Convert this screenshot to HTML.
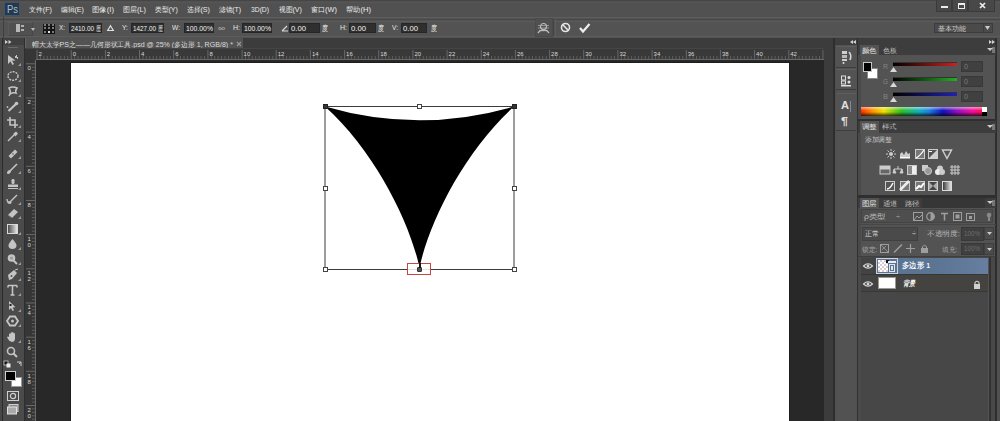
<!DOCTYPE html>
<html><head><meta charset="utf-8">
<style>
*{margin:0;padding:0;box-sizing:border-box}
html,body{width:1000px;height:421px;overflow:hidden;background:#282828;font-family:"Liberation Sans",sans-serif;}
.a{position:absolute}
.t{white-space:nowrap;line-height:1}
svg{position:absolute;overflow:visible}
</style></head><body>
<div class="a" style="left:0px;top:0px;width:1000px;height:17px;background:#515151;"></div>
<div class="a" style="left:0px;top:0px;width:1000px;height:1px;background:#464646;"></div>
<div class="a" style="left:0px;top:2px;width:1000px;height:1px;background:#555555;"></div>
<div class="a" style="left:4px;top:1.5px;width:16px;height:14.5px;background:#28384a;border:1px solid #3d566c;"></div>
<div class="a t" id="t1" style="left:6.5px;top:4.5px;font-size:10px;color:#9cc0d8;transform:scaleX(0.942);transform-origin:0 0;">Ps</div>
<div class="a t" id="t2" style="left:29px;top:6px;font-size:7.4px;color:#ececec;transform:scaleX(0.981);transform-origin:0 0;">文件(F)</div>
<div class="a t" id="t3" style="left:61px;top:6px;font-size:7.4px;color:#ececec;transform:scaleX(0.964);transform-origin:0 0;">编辑(E)</div>
<div class="a t" id="t4" style="left:92px;top:6px;font-size:7.4px;color:#ececec;transform:scaleX(1.048);transform-origin:0 0;">图像(I)</div>
<div class="a t" id="t5" style="left:123px;top:6px;font-size:7.4px;color:#ececec;transform:scaleX(0.998);transform-origin:0 0;">图层(L)</div>
<div class="a t" id="t6" style="left:155px;top:6px;font-size:7.4px;color:#ececec;transform:scaleX(0.964);transform-origin:0 0;">类型(Y)</div>
<div class="a t" id="t7" style="left:187px;top:6px;font-size:7.4px;color:#ececec;transform:scaleX(0.964);transform-origin:0 0;">选择(S)</div>
<div class="a t" id="t8" style="left:219px;top:6px;font-size:7.4px;color:#ececec;transform:scaleX(0.939);transform-origin:0 0;">滤镜(T)</div>
<div class="a t" id="t9" style="left:251px;top:6px;font-size:7.4px;color:#ececec;transform:scaleX(0.913);transform-origin:0 0;">3D(D)</div>
<div class="a t" id="t10" style="left:279px;top:6px;font-size:7.4px;color:#ececec;transform:scaleX(0.964);transform-origin:0 0;">视图(V)</div>
<div class="a t" id="t11" style="left:311px;top:6px;font-size:7.4px;color:#ececec;transform:scaleX(1.004);transform-origin:0 0;">窗口(W)</div>
<div class="a t" id="t12" style="left:346px;top:6px;font-size:7.4px;color:#ececec;transform:scaleX(1.030);transform-origin:0 0;">帮助(H)</div>
<div class="a" style="left:936px;top:0px;width:16px;height:12px;background:#484848;border:1px solid #3a3a3a;border-top:none;"></div>
<div class="a" style="left:941px;top:6px;width:7px;height:2px;background:#ececec;"></div>
<div class="a" style="left:952px;top:0px;width:16px;height:12px;background:#484848;border:1px solid #3a3a3a;border-top:none;"></div>
<div class="a" style="left:958px;top:3px;width:7px;height:6px;background:transparent;border:1.4px solid #ececec;border-top-width:2px;"></div>
<div class="a" style="left:968px;top:0px;width:27px;height:12px;background:#484848;border:1px solid #3a3a3a;border-top:none;"></div>
<svg style="left:978.5px;top:1.5px;" width="7" height="7" viewBox="0 0 7 7"><path d="M1 1 L6 6 M6 1 L1 6" stroke="#ececec" stroke-width="1.7"/></svg>
<div class="a" style="left:0px;top:17px;width:1000px;height:21px;background:#535353;"></div>
<div class="a" style="left:0px;top:17px;width:1000px;height:1px;background:#5e5e5e;"></div>
<div class="a" style="left:0px;top:19px;width:1000px;height:1px;background:#484848;"></div>
<div class="a" style="left:0px;top:21px;width:1000px;height:1px;background:#5a5a5a;"></div>
<div class="a" style="left:0px;top:36px;width:1000px;height:1px;background:#5c5c5c;"></div>
<div class="a" style="left:3px;top:17px;width:1px;height:21px;background:#3e3e3e;"></div>
<div class="a" style="left:7.5px;top:22px;width:25px;height:14px;background:#505050;border:1px solid #5a5a5a;border-right-color:#474747;border-bottom-color:#474747;"></div>
<svg style="left:16px;top:24px;" width="9" height="8" viewBox="0 0 9 8"><rect x="0" y="0" width="4" height="8" fill="#b8b8b8"/><rect x="5" y="1" width="3" height="2" fill="#b0b0b0"/><rect x="5" y="5" width="3" height="2" fill="#b0b0b0"/></svg>
<svg style="left:30.5px;top:27.5px;" width="4" height="3" viewBox="0 0 4 3"><path d="M0 0 L4 0 L2 3 Z" fill="#bbb"/></svg>
<div class="a" style="left:43px;top:23.5px;width:12px;height:10px;background:#141414;"></div>
<div class="a" style="left:43.5px;top:24.0px;width:2.5px;height:2.2px;background:#7a7a7a;"></div>
<div class="a" style="left:43.5px;top:27.3px;width:2.5px;height:2.2px;background:#7a7a7a;"></div>
<div class="a" style="left:43.5px;top:30.6px;width:2.5px;height:2.2px;background:#7a7a7a;"></div>
<div class="a" style="left:47.5px;top:24.0px;width:2.5px;height:2.2px;background:#7a7a7a;"></div>
<div class="a" style="left:47.5px;top:27.3px;width:2.5px;height:2.2px;background:#7a7a7a;"></div>
<div class="a" style="left:47.5px;top:30.6px;width:2.5px;height:2.2px;background:#e8e8e8;"></div>
<div class="a" style="left:51.5px;top:24.0px;width:2.5px;height:2.2px;background:#7a7a7a;"></div>
<div class="a" style="left:51.5px;top:27.3px;width:2.5px;height:2.2px;background:#7a7a7a;"></div>
<div class="a" style="left:51.5px;top:30.6px;width:2.5px;height:2.2px;background:#7a7a7a;"></div>
<div class="a t" id="t13" style="left:59px;top:24px;font-size:7.5px;color:#e6e6e6;transform:scaleX(0.846);transform-origin:0 0;">X:</div>
<div class="a" style="left:69px;top:23px;width:33px;height:10px;background:#2f2f2f;border:1px solid #262626;"></div>
<div class="a t" id="t14" style="left:70.5px;top:24.5px;font-size:8px;color:#f2f2f2;transform:scaleX(0.795);transform-origin:0 0;">2410.00</div>
<div class="a t" id="t15" style="left:96px;top:24.5px;font-size:7px;color:#e8e8e8;transform:scaleX(0.714);transform-origin:0 0;">厘</div>
<svg style="left:107px;top:25px;" width="7" height="6" viewBox="0 0 7 6"><path d="M3.5 0.7 L6.3 5.5 L0.7 5.5 Z" fill="none" stroke="#e0e0e0" stroke-width="1.2"/></svg>
<div class="a t" id="t16" style="left:122px;top:24px;font-size:7.5px;color:#e6e6e6;transform:scaleX(0.897);transform-origin:0 0;">Y:</div>
<div class="a" style="left:131px;top:23px;width:33px;height:10px;background:#2f2f2f;border:1px solid #262626;"></div>
<div class="a t" id="t17" style="left:132.5px;top:24.5px;font-size:8px;color:#f2f2f2;transform:scaleX(0.795);transform-origin:0 0;">1427.00</div>
<div class="a t" id="t18" style="left:158px;top:24.5px;font-size:7px;color:#e8e8e8;transform:scaleX(0.714);transform-origin:0 0;">厘</div>
<div class="a t" id="t19" style="left:172px;top:24px;font-size:7.5px;color:#e6e6e6;transform:scaleX(0.886);transform-origin:0 0;">W:</div>
<div class="a" style="left:184px;top:23px;width:30px;height:10px;background:#2f2f2f;border:1px solid #262626;"></div>
<div class="a t" id="t20" style="left:185.5px;top:24.5px;font-size:8px;color:#f2f2f2;transform:scaleX(0.855);transform-origin:0 0;">100.00%</div>
<div class="a t" id="t21" style="left:218px;top:24.5px;font-size:8px;color:#bbbbbb;transform:scaleX(1.227);transform-origin:0 0;">∞</div>
<div class="a t" id="t22" style="left:233px;top:24px;font-size:7.5px;color:#e6e6e6;transform:scaleX(0.933);transform-origin:0 0;">H:</div>
<div class="a" style="left:242px;top:23px;width:30px;height:10px;background:#2f2f2f;border:1px solid #262626;"></div>
<div class="a t" id="t23" style="left:243.5px;top:24.5px;font-size:8px;color:#f2f2f2;transform:scaleX(0.855);transform-origin:0 0;">100.00%</div>
<svg style="left:281px;top:24px;" width="8" height="8" viewBox="0 0 8 8"><path d="M1 7 L7 7 M1 7 L6 2" fill="none" stroke="#d8d8d8" stroke-width="1.2"/></svg>
<div class="a" style="left:289px;top:23px;width:31px;height:10px;background:#2f2f2f;border:1px solid #262626;"></div>
<div class="a t" id="t24" style="left:290.5px;top:24.5px;font-size:8px;color:#f2f2f2;transform:scaleX(0.963);transform-origin:0 0;">0.00</div>
<div class="a t" id="t25" style="left:322px;top:24.5px;font-size:7.5px;color:#f0f0f0;transform:scaleX(0.750);transform-origin:0 0;">度</div>
<div class="a t" id="t26" style="left:340px;top:24px;font-size:7.5px;color:#e6e6e6;transform:scaleX(0.933);transform-origin:0 0;">H:</div>
<div class="a" style="left:349px;top:23px;width:27px;height:10px;background:#2f2f2f;border:1px solid #262626;"></div>
<div class="a t" id="t27" style="left:350.5px;top:24.5px;font-size:8px;color:#f2f2f2;transform:scaleX(0.963);transform-origin:0 0;">0.00</div>
<div class="a t" id="t28" style="left:378px;top:24.5px;font-size:7.5px;color:#f0f0f0;transform:scaleX(0.750);transform-origin:0 0;">度</div>
<div class="a t" id="t29" style="left:392px;top:24px;font-size:7.5px;color:#e6e6e6;transform:scaleX(0.881);transform-origin:0 0;">V:</div>
<div class="a" style="left:401px;top:23px;width:26px;height:10px;background:#2f2f2f;border:1px solid #262626;"></div>
<div class="a t" id="t30" style="left:402.5px;top:24.5px;font-size:8px;color:#f2f2f2;transform:scaleX(0.963);transform-origin:0 0;">0.00</div>
<div class="a t" id="t31" style="left:431px;top:24.5px;font-size:7.5px;color:#f0f0f0;transform:scaleX(0.750);transform-origin:0 0;">度</div>
<div class="a" style="left:535px;top:18px;width:18px;height:19px;background:#505050;border:1px solid #4a4a4a;"></div>
<svg style="left:537px;top:22px;" width="13" height="12" viewBox="0 0 13 12"><circle cx="6.5" cy="4.5" r="3" fill="none" stroke="#bdbdbd" stroke-width="1.2"/><path d="M1 3.5 L12 3.5 M1 6 L12 6" stroke="#a8a8a8" stroke-width="0.8"/><path d="M1 11 Q3 7.5 6.5 8.5 Q10 7.5 12 11" fill="none" stroke="#bdbdbd" stroke-width="1.4"/></svg>
<div class="a" style="left:553px;top:19px;width:1px;height:17px;background:#444;"></div>
<div class="a" style="left:555px;top:19px;width:1px;height:17px;background:#5c5c5c;"></div>
<svg style="left:560px;top:22px;" width="12" height="12" viewBox="0 0 12 12"><circle cx="5.5" cy="5.5" r="4" fill="none" stroke="#e6e6e6" stroke-width="1.6"/><line x1="2.8" y1="2.8" x2="8.2" y2="8.2" stroke="#e6e6e6" stroke-width="1.6"/></svg>
<svg style="left:578px;top:22px;" width="14" height="12" viewBox="0 0 14 12"><path d="M2 6 L5 9.5 L11.5 2" fill="none" stroke="#eeeeee" stroke-width="2.2"/></svg>
<div class="a" style="left:934px;top:23px;width:59px;height:10px;background:#4a4a4a;border:1px solid #3c3c3c;"></div>
<div class="a t" id="t32" style="left:938px;top:24.5px;font-size:7px;color:#cfcfcf;transform:scaleX(1.000);transform-origin:0 0;">基本功能</div>
<div class="a" style="left:983px;top:24px;width:1px;height:8px;background:#3c3c3c;"></div>
<svg style="left:985px;top:26px;" width="6" height="5" viewBox="0 0 6 5"><path d="M0 0 L5 0 L2.5 4 Z" fill="#cccccc"/></svg>
<div class="a" style="left:25px;top:38px;width:799px;height:11px;background:#3c3c3c;"></div>
<div class="a" style="left:25px;top:38px;width:218px;height:11px;background:#535353;"></div>
<div class="a" style="left:25px;top:38px;width:1px;height:11px;background:#646464;"></div>
<div class="a t" id="t33" style="left:32px;top:41px;font-size:7.2px;color:#dcdcdc;transform:scaleX(0.983);transform-origin:0 0;">帽大太学PS之——几何形状工具.psd @ 25% (多边形 1, RGB/8) *</div>
<svg style="left:236px;top:41px;" width="6" height="6" viewBox="0 0 6 6"><path d="M1 1 L5 5 M5 1 L1 5" stroke="#9a9a9a" stroke-width="1.1"/></svg>
<div class="a" style="left:25px;top:48px;width:799px;height:12px;background:#393939;"></div>
<div class="a" style="left:25px;top:48px;width:799px;height:1px;background:#454545;"></div>
<div class="a" style="left:25px;top:49px;width:11px;height:372px;background:#363636;"></div>
<div class="a" style="left:36px;top:59px;width:788px;height:1px;background:#6a6a6a;"></div>
<div class="a" style="left:35px;top:60px;width:1px;height:361px;background:#6a6a6a;"></div>
<svg style="left:36px;top:49px;" width="788" height="11" viewBox="0 0 788 11"><rect x="0.5" y="1" width="1" height="10" fill="#686868"/><rect x="3.9" y="7" width="1" height="3" fill="#5e5e5e"/><rect x="7.4" y="7" width="1" height="3" fill="#5e5e5e"/><rect x="10.8" y="7" width="1" height="3" fill="#5e5e5e"/><rect x="14.2" y="7" width="1" height="3" fill="#5e5e5e"/><rect x="17.6" y="7" width="1" height="3" fill="#5e5e5e"/><rect x="21.0" y="7" width="1" height="3" fill="#5e5e5e"/><rect x="24.4" y="7" width="1" height="3" fill="#5e5e5e"/><rect x="27.9" y="7" width="1" height="3" fill="#5e5e5e"/><rect x="31.3" y="7" width="1" height="3" fill="#5e5e5e"/><rect x="34.7" y="1" width="1" height="10" fill="#686868"/><rect x="38.1" y="7" width="1" height="3" fill="#5e5e5e"/><rect x="41.5" y="7" width="1" height="3" fill="#5e5e5e"/><rect x="45.0" y="7" width="1" height="3" fill="#5e5e5e"/><rect x="48.4" y="7" width="1" height="3" fill="#5e5e5e"/><rect x="51.8" y="7" width="1" height="3" fill="#5e5e5e"/><rect x="55.2" y="7" width="1" height="3" fill="#5e5e5e"/><rect x="58.6" y="7" width="1" height="3" fill="#5e5e5e"/><rect x="62.0" y="7" width="1" height="3" fill="#5e5e5e"/><rect x="65.5" y="7" width="1" height="3" fill="#5e5e5e"/><rect x="68.9" y="1" width="1" height="10" fill="#686868"/><rect x="72.3" y="7" width="1" height="3" fill="#5e5e5e"/><rect x="75.7" y="7" width="1" height="3" fill="#5e5e5e"/><rect x="79.1" y="7" width="1" height="3" fill="#5e5e5e"/><rect x="82.5" y="7" width="1" height="3" fill="#5e5e5e"/><rect x="86.0" y="7" width="1" height="3" fill="#5e5e5e"/><rect x="89.4" y="7" width="1" height="3" fill="#5e5e5e"/><rect x="92.8" y="7" width="1" height="3" fill="#5e5e5e"/><rect x="96.2" y="7" width="1" height="3" fill="#5e5e5e"/><rect x="99.6" y="7" width="1" height="3" fill="#5e5e5e"/><rect x="103.0" y="1" width="1" height="10" fill="#686868"/><rect x="106.5" y="7" width="1" height="3" fill="#5e5e5e"/><rect x="109.9" y="7" width="1" height="3" fill="#5e5e5e"/><rect x="113.3" y="7" width="1" height="3" fill="#5e5e5e"/><rect x="116.7" y="7" width="1" height="3" fill="#5e5e5e"/><rect x="120.1" y="7" width="1" height="3" fill="#5e5e5e"/><rect x="123.5" y="7" width="1" height="3" fill="#5e5e5e"/><rect x="127.0" y="7" width="1" height="3" fill="#5e5e5e"/><rect x="130.4" y="7" width="1" height="3" fill="#5e5e5e"/><rect x="133.8" y="7" width="1" height="3" fill="#5e5e5e"/><rect x="137.2" y="1" width="1" height="10" fill="#686868"/><rect x="140.6" y="7" width="1" height="3" fill="#5e5e5e"/><rect x="144.0" y="7" width="1" height="3" fill="#5e5e5e"/><rect x="147.5" y="7" width="1" height="3" fill="#5e5e5e"/><rect x="150.9" y="7" width="1" height="3" fill="#5e5e5e"/><rect x="154.3" y="7" width="1" height="3" fill="#5e5e5e"/><rect x="157.7" y="7" width="1" height="3" fill="#5e5e5e"/><rect x="161.1" y="7" width="1" height="3" fill="#5e5e5e"/><rect x="164.5" y="7" width="1" height="3" fill="#5e5e5e"/><rect x="168.0" y="7" width="1" height="3" fill="#5e5e5e"/><rect x="171.4" y="1" width="1" height="10" fill="#686868"/><rect x="174.8" y="7" width="1" height="3" fill="#5e5e5e"/><rect x="178.2" y="7" width="1" height="3" fill="#5e5e5e"/><rect x="181.6" y="7" width="1" height="3" fill="#5e5e5e"/><rect x="185.0" y="7" width="1" height="3" fill="#5e5e5e"/><rect x="188.5" y="7" width="1" height="3" fill="#5e5e5e"/><rect x="191.9" y="7" width="1" height="3" fill="#5e5e5e"/><rect x="195.3" y="7" width="1" height="3" fill="#5e5e5e"/><rect x="198.7" y="7" width="1" height="3" fill="#5e5e5e"/><rect x="202.1" y="7" width="1" height="3" fill="#5e5e5e"/><rect x="205.6" y="1" width="1" height="10" fill="#686868"/><rect x="209.0" y="7" width="1" height="3" fill="#5e5e5e"/><rect x="212.4" y="7" width="1" height="3" fill="#5e5e5e"/><rect x="215.8" y="7" width="1" height="3" fill="#5e5e5e"/><rect x="219.2" y="7" width="1" height="3" fill="#5e5e5e"/><rect x="222.6" y="7" width="1" height="3" fill="#5e5e5e"/><rect x="226.1" y="7" width="1" height="3" fill="#5e5e5e"/><rect x="229.5" y="7" width="1" height="3" fill="#5e5e5e"/><rect x="232.9" y="7" width="1" height="3" fill="#5e5e5e"/><rect x="236.3" y="7" width="1" height="3" fill="#5e5e5e"/><rect x="239.7" y="1" width="1" height="10" fill="#686868"/><rect x="243.1" y="7" width="1" height="3" fill="#5e5e5e"/><rect x="246.6" y="7" width="1" height="3" fill="#5e5e5e"/><rect x="250.0" y="7" width="1" height="3" fill="#5e5e5e"/><rect x="253.4" y="7" width="1" height="3" fill="#5e5e5e"/><rect x="256.8" y="7" width="1" height="3" fill="#5e5e5e"/><rect x="260.2" y="7" width="1" height="3" fill="#5e5e5e"/><rect x="263.6" y="7" width="1" height="3" fill="#5e5e5e"/><rect x="267.1" y="7" width="1" height="3" fill="#5e5e5e"/><rect x="270.5" y="7" width="1" height="3" fill="#5e5e5e"/><rect x="273.9" y="1" width="1" height="10" fill="#686868"/><rect x="277.3" y="7" width="1" height="3" fill="#5e5e5e"/><rect x="280.7" y="7" width="1" height="3" fill="#5e5e5e"/><rect x="284.1" y="7" width="1" height="3" fill="#5e5e5e"/><rect x="287.6" y="7" width="1" height="3" fill="#5e5e5e"/><rect x="291.0" y="7" width="1" height="3" fill="#5e5e5e"/><rect x="294.4" y="7" width="1" height="3" fill="#5e5e5e"/><rect x="297.8" y="7" width="1" height="3" fill="#5e5e5e"/><rect x="301.2" y="7" width="1" height="3" fill="#5e5e5e"/><rect x="304.6" y="7" width="1" height="3" fill="#5e5e5e"/><rect x="308.1" y="1" width="1" height="10" fill="#686868"/><rect x="311.5" y="7" width="1" height="3" fill="#5e5e5e"/><rect x="314.9" y="7" width="1" height="3" fill="#5e5e5e"/><rect x="318.3" y="7" width="1" height="3" fill="#5e5e5e"/><rect x="321.7" y="7" width="1" height="3" fill="#5e5e5e"/><rect x="325.1" y="7" width="1" height="3" fill="#5e5e5e"/><rect x="328.6" y="7" width="1" height="3" fill="#5e5e5e"/><rect x="332.0" y="7" width="1" height="3" fill="#5e5e5e"/><rect x="335.4" y="7" width="1" height="3" fill="#5e5e5e"/><rect x="338.8" y="7" width="1" height="3" fill="#5e5e5e"/><rect x="342.2" y="1" width="1" height="10" fill="#686868"/><rect x="345.6" y="7" width="1" height="3" fill="#5e5e5e"/><rect x="349.1" y="7" width="1" height="3" fill="#5e5e5e"/><rect x="352.5" y="7" width="1" height="3" fill="#5e5e5e"/><rect x="355.9" y="7" width="1" height="3" fill="#5e5e5e"/><rect x="359.3" y="7" width="1" height="3" fill="#5e5e5e"/><rect x="362.7" y="7" width="1" height="3" fill="#5e5e5e"/><rect x="366.1" y="7" width="1" height="3" fill="#5e5e5e"/><rect x="369.6" y="7" width="1" height="3" fill="#5e5e5e"/><rect x="373.0" y="7" width="1" height="3" fill="#5e5e5e"/><rect x="376.4" y="1" width="1" height="10" fill="#686868"/><rect x="379.8" y="7" width="1" height="3" fill="#5e5e5e"/><rect x="383.2" y="7" width="1" height="3" fill="#5e5e5e"/><rect x="386.7" y="7" width="1" height="3" fill="#5e5e5e"/><rect x="390.1" y="7" width="1" height="3" fill="#5e5e5e"/><rect x="393.5" y="7" width="1" height="3" fill="#5e5e5e"/><rect x="396.9" y="7" width="1" height="3" fill="#5e5e5e"/><rect x="400.3" y="7" width="1" height="3" fill="#5e5e5e"/><rect x="403.7" y="7" width="1" height="3" fill="#5e5e5e"/><rect x="407.2" y="7" width="1" height="3" fill="#5e5e5e"/><rect x="410.6" y="1" width="1" height="10" fill="#686868"/><rect x="414.0" y="7" width="1" height="3" fill="#5e5e5e"/><rect x="417.4" y="7" width="1" height="3" fill="#5e5e5e"/><rect x="420.8" y="7" width="1" height="3" fill="#5e5e5e"/><rect x="424.2" y="7" width="1" height="3" fill="#5e5e5e"/><rect x="427.7" y="7" width="1" height="3" fill="#5e5e5e"/><rect x="431.1" y="7" width="1" height="3" fill="#5e5e5e"/><rect x="434.5" y="7" width="1" height="3" fill="#5e5e5e"/><rect x="437.9" y="7" width="1" height="3" fill="#5e5e5e"/><rect x="441.3" y="7" width="1" height="3" fill="#5e5e5e"/><rect x="444.7" y="1" width="1" height="10" fill="#686868"/><rect x="448.2" y="7" width="1" height="3" fill="#5e5e5e"/><rect x="451.6" y="7" width="1" height="3" fill="#5e5e5e"/><rect x="455.0" y="7" width="1" height="3" fill="#5e5e5e"/><rect x="458.4" y="7" width="1" height="3" fill="#5e5e5e"/><rect x="461.8" y="7" width="1" height="3" fill="#5e5e5e"/><rect x="465.2" y="7" width="1" height="3" fill="#5e5e5e"/><rect x="468.7" y="7" width="1" height="3" fill="#5e5e5e"/><rect x="472.1" y="7" width="1" height="3" fill="#5e5e5e"/><rect x="475.5" y="7" width="1" height="3" fill="#5e5e5e"/><rect x="478.9" y="1" width="1" height="10" fill="#686868"/><rect x="482.3" y="7" width="1" height="3" fill="#5e5e5e"/><rect x="485.7" y="7" width="1" height="3" fill="#5e5e5e"/><rect x="489.2" y="7" width="1" height="3" fill="#5e5e5e"/><rect x="492.6" y="7" width="1" height="3" fill="#5e5e5e"/><rect x="496.0" y="7" width="1" height="3" fill="#5e5e5e"/><rect x="499.4" y="7" width="1" height="3" fill="#5e5e5e"/><rect x="502.8" y="7" width="1" height="3" fill="#5e5e5e"/><rect x="506.2" y="7" width="1" height="3" fill="#5e5e5e"/><rect x="509.7" y="7" width="1" height="3" fill="#5e5e5e"/><rect x="513.1" y="1" width="1" height="10" fill="#686868"/><rect x="516.5" y="7" width="1" height="3" fill="#5e5e5e"/><rect x="519.9" y="7" width="1" height="3" fill="#5e5e5e"/><rect x="523.3" y="7" width="1" height="3" fill="#5e5e5e"/><rect x="526.7" y="7" width="1" height="3" fill="#5e5e5e"/><rect x="530.2" y="7" width="1" height="3" fill="#5e5e5e"/><rect x="533.6" y="7" width="1" height="3" fill="#5e5e5e"/><rect x="537.0" y="7" width="1" height="3" fill="#5e5e5e"/><rect x="540.4" y="7" width="1" height="3" fill="#5e5e5e"/><rect x="543.8" y="7" width="1" height="3" fill="#5e5e5e"/><rect x="547.2" y="1" width="1" height="10" fill="#686868"/><rect x="550.7" y="7" width="1" height="3" fill="#5e5e5e"/><rect x="554.1" y="7" width="1" height="3" fill="#5e5e5e"/><rect x="557.5" y="7" width="1" height="3" fill="#5e5e5e"/><rect x="560.9" y="7" width="1" height="3" fill="#5e5e5e"/><rect x="564.3" y="7" width="1" height="3" fill="#5e5e5e"/><rect x="567.8" y="7" width="1" height="3" fill="#5e5e5e"/><rect x="571.2" y="7" width="1" height="3" fill="#5e5e5e"/><rect x="574.6" y="7" width="1" height="3" fill="#5e5e5e"/><rect x="578.0" y="7" width="1" height="3" fill="#5e5e5e"/><rect x="581.4" y="1" width="1" height="10" fill="#686868"/><rect x="584.8" y="7" width="1" height="3" fill="#5e5e5e"/><rect x="588.3" y="7" width="1" height="3" fill="#5e5e5e"/><rect x="591.7" y="7" width="1" height="3" fill="#5e5e5e"/><rect x="595.1" y="7" width="1" height="3" fill="#5e5e5e"/><rect x="598.5" y="7" width="1" height="3" fill="#5e5e5e"/><rect x="601.9" y="7" width="1" height="3" fill="#5e5e5e"/><rect x="605.3" y="7" width="1" height="3" fill="#5e5e5e"/><rect x="608.8" y="7" width="1" height="3" fill="#5e5e5e"/><rect x="612.2" y="7" width="1" height="3" fill="#5e5e5e"/><rect x="615.6" y="1" width="1" height="10" fill="#686868"/><rect x="619.0" y="7" width="1" height="3" fill="#5e5e5e"/><rect x="622.4" y="7" width="1" height="3" fill="#5e5e5e"/><rect x="625.8" y="7" width="1" height="3" fill="#5e5e5e"/><rect x="629.3" y="7" width="1" height="3" fill="#5e5e5e"/><rect x="632.7" y="7" width="1" height="3" fill="#5e5e5e"/><rect x="636.1" y="7" width="1" height="3" fill="#5e5e5e"/><rect x="639.5" y="7" width="1" height="3" fill="#5e5e5e"/><rect x="642.9" y="7" width="1" height="3" fill="#5e5e5e"/><rect x="646.3" y="7" width="1" height="3" fill="#5e5e5e"/><rect x="649.8" y="1" width="1" height="10" fill="#686868"/><rect x="653.2" y="7" width="1" height="3" fill="#5e5e5e"/><rect x="656.6" y="7" width="1" height="3" fill="#5e5e5e"/><rect x="660.0" y="7" width="1" height="3" fill="#5e5e5e"/><rect x="663.4" y="7" width="1" height="3" fill="#5e5e5e"/><rect x="666.8" y="7" width="1" height="3" fill="#5e5e5e"/><rect x="670.3" y="7" width="1" height="3" fill="#5e5e5e"/><rect x="673.7" y="7" width="1" height="3" fill="#5e5e5e"/><rect x="677.1" y="7" width="1" height="3" fill="#5e5e5e"/><rect x="680.5" y="7" width="1" height="3" fill="#5e5e5e"/><rect x="683.9" y="1" width="1" height="10" fill="#686868"/><rect x="687.3" y="7" width="1" height="3" fill="#5e5e5e"/><rect x="690.8" y="7" width="1" height="3" fill="#5e5e5e"/><rect x="694.2" y="7" width="1" height="3" fill="#5e5e5e"/><rect x="697.6" y="7" width="1" height="3" fill="#5e5e5e"/><rect x="701.0" y="7" width="1" height="3" fill="#5e5e5e"/><rect x="704.4" y="7" width="1" height="3" fill="#5e5e5e"/><rect x="707.8" y="7" width="1" height="3" fill="#5e5e5e"/><rect x="711.3" y="7" width="1" height="3" fill="#5e5e5e"/><rect x="714.7" y="7" width="1" height="3" fill="#5e5e5e"/><rect x="718.1" y="1" width="1" height="10" fill="#686868"/><rect x="721.5" y="7" width="1" height="3" fill="#5e5e5e"/><rect x="724.9" y="7" width="1" height="3" fill="#5e5e5e"/><rect x="728.4" y="7" width="1" height="3" fill="#5e5e5e"/><rect x="731.8" y="7" width="1" height="3" fill="#5e5e5e"/><rect x="735.2" y="7" width="1" height="3" fill="#5e5e5e"/><rect x="738.6" y="7" width="1" height="3" fill="#5e5e5e"/><rect x="742.0" y="7" width="1" height="3" fill="#5e5e5e"/><rect x="745.4" y="7" width="1" height="3" fill="#5e5e5e"/><rect x="748.9" y="7" width="1" height="3" fill="#5e5e5e"/><rect x="752.3" y="1" width="1" height="10" fill="#686868"/><rect x="755.7" y="7" width="1" height="3" fill="#5e5e5e"/><rect x="759.1" y="7" width="1" height="3" fill="#5e5e5e"/><rect x="762.5" y="7" width="1" height="3" fill="#5e5e5e"/><rect x="765.9" y="7" width="1" height="3" fill="#5e5e5e"/><rect x="769.4" y="7" width="1" height="3" fill="#5e5e5e"/><rect x="772.8" y="7" width="1" height="3" fill="#5e5e5e"/><rect x="776.2" y="7" width="1" height="3" fill="#5e5e5e"/><rect x="779.6" y="7" width="1" height="3" fill="#5e5e5e"/><rect x="783.0" y="7" width="1" height="3" fill="#5e5e5e"/><rect x="786.4" y="1" width="1" height="10" fill="#686868"/></svg>
<div class="a t" id="t34" style="left:38.53px;top:50.5px;font-size:6px;color:#d8d8d8;">2</div>
<div class="a t" id="t35" style="left:72.7px;top:50.5px;font-size:6px;color:#d8d8d8;">0</div>
<div class="a t" id="t36" style="left:106.87px;top:50.5px;font-size:6px;color:#d8d8d8;">2</div>
<div class="a t" id="t37" style="left:141.04000000000002px;top:50.5px;font-size:6px;color:#d8d8d8;">4</div>
<div class="a t" id="t38" style="left:175.21px;top:50.5px;font-size:6px;color:#d8d8d8;">6</div>
<div class="a t" id="t39" style="left:209.38px;top:50.5px;font-size:6px;color:#d8d8d8;">8</div>
<div class="a t" id="t40" style="left:243.55px;top:50.5px;font-size:6px;color:#d8d8d8;">10</div>
<div class="a t" id="t41" style="left:277.72px;top:50.5px;font-size:6px;color:#d8d8d8;">12</div>
<div class="a t" id="t42" style="left:311.89px;top:50.5px;font-size:6px;color:#d8d8d8;">14</div>
<div class="a t" id="t43" style="left:346.06px;top:50.5px;font-size:6px;color:#d8d8d8;">16</div>
<div class="a t" id="t44" style="left:380.23px;top:50.5px;font-size:6px;color:#d8d8d8;">18</div>
<div class="a t" id="t45" style="left:414.40000000000003px;top:50.5px;font-size:6px;color:#d8d8d8;">20</div>
<div class="a t" id="t46" style="left:448.57px;top:50.5px;font-size:6px;color:#d8d8d8;">22</div>
<div class="a t" id="t47" style="left:482.74px;top:50.5px;font-size:6px;color:#d8d8d8;">24</div>
<div class="a t" id="t48" style="left:516.9100000000001px;top:50.5px;font-size:6px;color:#d8d8d8;">26</div>
<div class="a t" id="t49" style="left:551.08px;top:50.5px;font-size:6px;color:#d8d8d8;">28</div>
<div class="a t" id="t50" style="left:585.2500000000001px;top:50.5px;font-size:6px;color:#d8d8d8;">30</div>
<div class="a t" id="t51" style="left:619.4200000000001px;top:50.5px;font-size:6px;color:#d8d8d8;">32</div>
<div class="a t" id="t52" style="left:653.59px;top:50.5px;font-size:6px;color:#d8d8d8;">34</div>
<div class="a t" id="t53" style="left:687.7600000000001px;top:50.5px;font-size:6px;color:#d8d8d8;">36</div>
<div class="a t" id="t54" style="left:721.9300000000001px;top:50.5px;font-size:6px;color:#d8d8d8;">38</div>
<div class="a t" id="t55" style="left:756.1000000000001px;top:50.5px;font-size:6px;color:#d8d8d8;">40</div>
<div class="a t" id="t56" style="left:790.2700000000001px;top:50.5px;font-size:6px;color:#d8d8d8;">42</div>
<svg style="left:25px;top:60px;" width="11" height="361" viewBox="0 0 11 361"><rect x="1" y="3.3" width="10" height="1" fill="#686868"/><rect x="7" y="6.7" width="3" height="1" fill="#5e5e5e"/><rect x="7" y="10.1" width="3" height="1" fill="#5e5e5e"/><rect x="7" y="13.6" width="3" height="1" fill="#5e5e5e"/><rect x="7" y="17.0" width="3" height="1" fill="#5e5e5e"/><rect x="7" y="20.4" width="3" height="1" fill="#5e5e5e"/><rect x="7" y="23.8" width="3" height="1" fill="#5e5e5e"/><rect x="7" y="27.2" width="3" height="1" fill="#5e5e5e"/><rect x="7" y="30.6" width="3" height="1" fill="#5e5e5e"/><rect x="7" y="34.1" width="3" height="1" fill="#5e5e5e"/><rect x="1" y="37.5" width="10" height="1" fill="#686868"/><rect x="7" y="40.9" width="3" height="1" fill="#5e5e5e"/><rect x="7" y="44.3" width="3" height="1" fill="#5e5e5e"/><rect x="7" y="47.7" width="3" height="1" fill="#5e5e5e"/><rect x="7" y="51.1" width="3" height="1" fill="#5e5e5e"/><rect x="7" y="54.6" width="3" height="1" fill="#5e5e5e"/><rect x="7" y="58.0" width="3" height="1" fill="#5e5e5e"/><rect x="7" y="61.4" width="3" height="1" fill="#5e5e5e"/><rect x="7" y="64.8" width="3" height="1" fill="#5e5e5e"/><rect x="7" y="68.2" width="3" height="1" fill="#5e5e5e"/><rect x="1" y="71.6" width="10" height="1" fill="#686868"/><rect x="7" y="75.1" width="3" height="1" fill="#5e5e5e"/><rect x="7" y="78.5" width="3" height="1" fill="#5e5e5e"/><rect x="7" y="81.9" width="3" height="1" fill="#5e5e5e"/><rect x="7" y="85.3" width="3" height="1" fill="#5e5e5e"/><rect x="7" y="88.7" width="3" height="1" fill="#5e5e5e"/><rect x="7" y="92.1" width="3" height="1" fill="#5e5e5e"/><rect x="7" y="95.6" width="3" height="1" fill="#5e5e5e"/><rect x="7" y="99.0" width="3" height="1" fill="#5e5e5e"/><rect x="7" y="102.4" width="3" height="1" fill="#5e5e5e"/><rect x="1" y="105.8" width="10" height="1" fill="#686868"/><rect x="7" y="109.2" width="3" height="1" fill="#5e5e5e"/><rect x="7" y="112.6" width="3" height="1" fill="#5e5e5e"/><rect x="7" y="116.1" width="3" height="1" fill="#5e5e5e"/><rect x="7" y="119.5" width="3" height="1" fill="#5e5e5e"/><rect x="7" y="122.9" width="3" height="1" fill="#5e5e5e"/><rect x="7" y="126.3" width="3" height="1" fill="#5e5e5e"/><rect x="7" y="129.7" width="3" height="1" fill="#5e5e5e"/><rect x="7" y="133.1" width="3" height="1" fill="#5e5e5e"/><rect x="7" y="136.6" width="3" height="1" fill="#5e5e5e"/><rect x="1" y="140.0" width="10" height="1" fill="#686868"/><rect x="7" y="143.4" width="3" height="1" fill="#5e5e5e"/><rect x="7" y="146.8" width="3" height="1" fill="#5e5e5e"/><rect x="7" y="150.2" width="3" height="1" fill="#5e5e5e"/><rect x="7" y="153.6" width="3" height="1" fill="#5e5e5e"/><rect x="7" y="157.1" width="3" height="1" fill="#5e5e5e"/><rect x="7" y="160.5" width="3" height="1" fill="#5e5e5e"/><rect x="7" y="163.9" width="3" height="1" fill="#5e5e5e"/><rect x="7" y="167.3" width="3" height="1" fill="#5e5e5e"/><rect x="7" y="170.7" width="3" height="1" fill="#5e5e5e"/><rect x="1" y="174.1" width="10" height="1" fill="#686868"/><rect x="7" y="177.6" width="3" height="1" fill="#5e5e5e"/><rect x="7" y="181.0" width="3" height="1" fill="#5e5e5e"/><rect x="7" y="184.4" width="3" height="1" fill="#5e5e5e"/><rect x="7" y="187.8" width="3" height="1" fill="#5e5e5e"/><rect x="7" y="191.2" width="3" height="1" fill="#5e5e5e"/><rect x="7" y="194.7" width="3" height="1" fill="#5e5e5e"/><rect x="7" y="198.1" width="3" height="1" fill="#5e5e5e"/><rect x="7" y="201.5" width="3" height="1" fill="#5e5e5e"/><rect x="7" y="204.9" width="3" height="1" fill="#5e5e5e"/><rect x="1" y="208.3" width="10" height="1" fill="#686868"/><rect x="7" y="211.7" width="3" height="1" fill="#5e5e5e"/><rect x="7" y="215.2" width="3" height="1" fill="#5e5e5e"/><rect x="7" y="218.6" width="3" height="1" fill="#5e5e5e"/><rect x="7" y="222.0" width="3" height="1" fill="#5e5e5e"/><rect x="7" y="225.4" width="3" height="1" fill="#5e5e5e"/><rect x="7" y="228.8" width="3" height="1" fill="#5e5e5e"/><rect x="7" y="232.2" width="3" height="1" fill="#5e5e5e"/><rect x="7" y="235.7" width="3" height="1" fill="#5e5e5e"/><rect x="7" y="239.1" width="3" height="1" fill="#5e5e5e"/><rect x="1" y="242.5" width="10" height="1" fill="#686868"/><rect x="7" y="245.9" width="3" height="1" fill="#5e5e5e"/><rect x="7" y="249.3" width="3" height="1" fill="#5e5e5e"/><rect x="7" y="252.7" width="3" height="1" fill="#5e5e5e"/><rect x="7" y="256.2" width="3" height="1" fill="#5e5e5e"/><rect x="7" y="259.6" width="3" height="1" fill="#5e5e5e"/><rect x="7" y="263.0" width="3" height="1" fill="#5e5e5e"/><rect x="7" y="266.4" width="3" height="1" fill="#5e5e5e"/><rect x="7" y="269.8" width="3" height="1" fill="#5e5e5e"/><rect x="7" y="273.2" width="3" height="1" fill="#5e5e5e"/><rect x="1" y="276.7" width="10" height="1" fill="#686868"/><rect x="7" y="280.1" width="3" height="1" fill="#5e5e5e"/><rect x="7" y="283.5" width="3" height="1" fill="#5e5e5e"/><rect x="7" y="286.9" width="3" height="1" fill="#5e5e5e"/><rect x="7" y="290.3" width="3" height="1" fill="#5e5e5e"/><rect x="7" y="293.7" width="3" height="1" fill="#5e5e5e"/><rect x="7" y="297.2" width="3" height="1" fill="#5e5e5e"/><rect x="7" y="300.6" width="3" height="1" fill="#5e5e5e"/><rect x="7" y="304.0" width="3" height="1" fill="#5e5e5e"/><rect x="7" y="307.4" width="3" height="1" fill="#5e5e5e"/><rect x="1" y="310.8" width="10" height="1" fill="#686868"/><rect x="7" y="314.2" width="3" height="1" fill="#5e5e5e"/><rect x="7" y="317.7" width="3" height="1" fill="#5e5e5e"/><rect x="7" y="321.1" width="3" height="1" fill="#5e5e5e"/><rect x="7" y="324.5" width="3" height="1" fill="#5e5e5e"/><rect x="7" y="327.9" width="3" height="1" fill="#5e5e5e"/><rect x="7" y="331.3" width="3" height="1" fill="#5e5e5e"/><rect x="7" y="334.7" width="3" height="1" fill="#5e5e5e"/><rect x="7" y="338.2" width="3" height="1" fill="#5e5e5e"/><rect x="7" y="341.6" width="3" height="1" fill="#5e5e5e"/><rect x="1" y="345.0" width="10" height="1" fill="#686868"/><rect x="7" y="348.4" width="3" height="1" fill="#5e5e5e"/><rect x="7" y="351.8" width="3" height="1" fill="#5e5e5e"/><rect x="7" y="355.3" width="3" height="1" fill="#5e5e5e"/><rect x="7" y="358.7" width="3" height="1" fill="#5e5e5e"/></svg>
<div class="a t" id="t57" style="left:27.5px;top:65.3px;font-size:6px;color:#d8d8d8;">0</div>
<div class="a t" id="t58" style="left:27.5px;top:99.47px;font-size:6px;color:#d8d8d8;">2</div>
<div class="a t" id="t59" style="left:27.5px;top:133.64px;font-size:6px;color:#d8d8d8;">4</div>
<div class="a t" id="t60" style="left:27.5px;top:167.81px;font-size:6px;color:#d8d8d8;">6</div>
<div class="a t" id="t61" style="left:27.5px;top:201.98000000000002px;font-size:6px;color:#d8d8d8;">8</div>
<div class="a t" id="t62" style="left:27.5px;top:236.15000000000003px;font-size:6px;color:#d8d8d8;">1</div>
<div class="a t" id="t63" style="left:27.5px;top:242.15000000000003px;font-size:6px;color:#d8d8d8;">0</div>
<div class="a t" id="t64" style="left:27.5px;top:270.32px;font-size:6px;color:#d8d8d8;">1</div>
<div class="a t" id="t65" style="left:27.5px;top:276.32px;font-size:6px;color:#d8d8d8;">2</div>
<div class="a t" id="t66" style="left:27.5px;top:304.49px;font-size:6px;color:#d8d8d8;">1</div>
<div class="a t" id="t67" style="left:27.5px;top:310.49px;font-size:6px;color:#d8d8d8;">4</div>
<div class="a t" id="t68" style="left:27.5px;top:338.66px;font-size:6px;color:#d8d8d8;">1</div>
<div class="a t" id="t69" style="left:27.5px;top:344.66px;font-size:6px;color:#d8d8d8;">6</div>
<div class="a t" id="t70" style="left:27.5px;top:372.83000000000004px;font-size:6px;color:#d8d8d8;">1</div>
<div class="a t" id="t71" style="left:27.5px;top:378.83000000000004px;font-size:6px;color:#d8d8d8;">8</div>
<div class="a t" id="t72" style="left:27.5px;top:407.00000000000006px;font-size:6px;color:#d8d8d8;">2</div>
<div class="a t" id="t73" style="left:27.5px;top:413.00000000000006px;font-size:6px;color:#d8d8d8;">0</div>
<div class="a" style="left:0px;top:38px;width:3px;height:383px;background:#474747;"></div>
<div class="a" style="left:1.5px;top:38px;width:1px;height:383px;background:#2c2c2c;"></div>
<div class="a" style="left:2.5px;top:38px;width:21.5px;height:383px;background:#4b4b4b;"></div>
<div class="a" style="left:2.5px;top:38px;width:21.5px;height:7px;background:#404040;"></div>
<svg style="left:5px;top:40px;" width="7" height="4" viewBox="0 0 7 4"><path d="M0 0 L3 2 L0 4 Z M3.5 0 L6.5 2 L3.5 4 Z" fill="#d0d0d0"/></svg>
<div class="a" style="left:8px;top:47px;width:10px;height:1px;background:#6a6a6a;"></div>
<div class="a" style="left:24px;top:38px;width:1px;height:383px;background:#2e2e2e;"></div>
<svg style="left:6px;top:54px;" width="14" height="12" viewBox="0 0 14 12"><path d="M2 1 L2 10 L4.5 7.5 L6.5 11 L8 10 L6 6.8 L9.5 6.5 Z" fill="#c4c4c4"/><path d="M9 2 L12 5 M10.5 1 L10.5 4 M12 3.5 L9 3.5" stroke="#c4c4c4" stroke-width="1"/></svg>
<svg style="left:18px;top:63px;" width="3" height="3" viewBox="0 0 3 3"><path d="M3 0 L3 3 L0 3 Z" fill="#9a9a9a"/></svg>
<svg style="left:6px;top:70px;" width="14" height="12" viewBox="0 0 14 12"><ellipse cx="7" cy="6" rx="5" ry="4.3" fill="none" stroke="#c4c4c4" stroke-width="1.4" stroke-dasharray="2 1"/></svg>
<svg style="left:18px;top:79px;" width="3" height="3" viewBox="0 0 3 3"><path d="M3 0 L3 3 L0 3 Z" fill="#9a9a9a"/></svg>
<svg style="left:6px;top:85px;" width="14" height="12" viewBox="0 0 14 12"><path d="M3 3 Q7 1 11 3 Q9 6 10 8 Q7 7 4 9 Q5 6 3 3 Z" fill="none" stroke="#c4c4c4" stroke-width="1.5"/><path d="M4 9 L3 11" stroke="#c4c4c4" stroke-width="1.2"/></svg>
<svg style="left:18px;top:94px;" width="3" height="3" viewBox="0 0 3 3"><path d="M3 0 L3 3 L0 3 Z" fill="#9a9a9a"/></svg>
<svg style="left:6px;top:101px;" width="14" height="12" viewBox="0 0 14 12"><path d="M2.5 10 L10 3" stroke="#c4c4c4" stroke-width="2.2"/><circle cx="10.5" cy="2.5" r="1.8" fill="#c4c4c4"/><path d="M1.5 7 L1.5 5 M0.5 6 L2.5 6" stroke="#c4c4c4" stroke-width="0.8"/></svg>
<svg style="left:18px;top:110px;" width="3" height="3" viewBox="0 0 3 3"><path d="M3 0 L3 3 L0 3 Z" fill="#9a9a9a"/></svg>
<svg style="left:6px;top:116px;" width="14" height="12" viewBox="0 0 14 12"><path d="M4 1 L4 9 L12 9 M1 4 L9 4 L9 12" fill="none" stroke="#c4c4c4" stroke-width="1.6"/></svg>
<svg style="left:18px;top:125px;" width="3" height="3" viewBox="0 0 3 3"><path d="M3 0 L3 3 L0 3 Z" fill="#9a9a9a"/></svg>
<svg style="left:6px;top:130px;" width="14" height="12" viewBox="0 0 14 12"><path d="M2 11 L8 5" stroke="#c4c4c4" stroke-width="1.4"/><path d="M7 4 L10 1.5 L12 3.5 L9.5 6.5 Z" fill="#c4c4c4"/></svg>
<svg style="left:18px;top:139px;" width="3" height="3" viewBox="0 0 3 3"><path d="M3 0 L3 3 L0 3 Z" fill="#9a9a9a"/></svg>
<svg style="left:6px;top:147px;" width="14" height="12" viewBox="0 0 14 12"><path d="M2.5 9 L9 2.5 L11.5 5 L5 11.5 Z" fill="#c4c4c4"/><circle cx="7" cy="7" r="0.8" fill="#555"/></svg>
<svg style="left:18px;top:156px;" width="3" height="3" viewBox="0 0 3 3"><path d="M3 0 L3 3 L0 3 Z" fill="#9a9a9a"/></svg>
<svg style="left:6px;top:162px;" width="14" height="12" viewBox="0 0 14 12"><path d="M3.5 9.5 L11 2" stroke="#c4c4c4" stroke-width="1.6"/><ellipse cx="3" cy="10" rx="2.3" ry="1.5" fill="#c4c4c4" transform="rotate(-40 3 10)"/></svg>
<svg style="left:18px;top:171px;" width="3" height="3" viewBox="0 0 3 3"><path d="M3 0 L3 3 L0 3 Z" fill="#9a9a9a"/></svg>
<svg style="left:6px;top:178px;" width="14" height="12" viewBox="0 0 14 12"><rect x="5.5" y="1" width="3" height="5" rx="1.2" fill="#c4c4c4"/><rect x="2" y="6.5" width="10" height="2.5" fill="#c4c4c4"/><rect x="2" y="10" width="10" height="1" fill="#c4c4c4"/></svg>
<svg style="left:18px;top:187px;" width="3" height="3" viewBox="0 0 3 3"><path d="M3 0 L3 3 L0 3 Z" fill="#9a9a9a"/></svg>
<svg style="left:6px;top:193px;" width="14" height="12" viewBox="0 0 14 12"><path d="M4 9 L11 2" stroke="#c4c4c4" stroke-width="1.5"/><path d="M1 6 Q1 10 5 10" fill="none" stroke="#c4c4c4" stroke-width="1.3"/><ellipse cx="3.5" cy="9.5" rx="2" ry="1.3" fill="#c4c4c4"/></svg>
<svg style="left:18px;top:202px;" width="3" height="3" viewBox="0 0 3 3"><path d="M3 0 L3 3 L0 3 Z" fill="#9a9a9a"/></svg>
<svg style="left:6px;top:207px;" width="14" height="12" viewBox="0 0 14 12"><path d="M2 8 L8 2 L12 5 L6 11 Z" fill="#c4c4c4"/><path d="M2 8 L6 11" stroke="#777" stroke-width="1"/></svg>
<svg style="left:18px;top:216px;" width="3" height="3" viewBox="0 0 3 3"><path d="M3 0 L3 3 L0 3 Z" fill="#9a9a9a"/></svg>
<svg style="left:6px;top:223px;" width="14" height="12" viewBox="0 0 14 12"><defs><linearGradient id="gg" x1="0" x2="1"><stop offset="0" stop-color="#444"/><stop offset="1" stop-color="#eee"/></linearGradient></defs><rect x="1.5" y="1.5" width="10" height="9" fill="url(#gg)" stroke="#d8d8d8" stroke-width="1"/></svg>
<svg style="left:18px;top:232px;" width="3" height="3" viewBox="0 0 3 3"><path d="M3 0 L3 3 L0 3 Z" fill="#9a9a9a"/></svg>
<svg style="left:6px;top:238px;" width="14" height="12" viewBox="0 0 14 12"><path d="M6.5 1 Q11 6 10.5 8 Q10 11 6.5 11 Q3 11 2.5 8 Q2 6 6.5 1 Z" fill="#c4c4c4"/></svg>
<svg style="left:18px;top:247px;" width="3" height="3" viewBox="0 0 3 3"><path d="M3 0 L3 3 L0 3 Z" fill="#9a9a9a"/></svg>
<svg style="left:6px;top:253px;" width="14" height="12" viewBox="0 0 14 12"><circle cx="5.5" cy="5" r="3.8" fill="#c4c4c4"/><circle cx="5.5" cy="5" r="1.5" fill="#999"/><path d="M7.5 7.5 L11 11" stroke="#c4c4c4" stroke-width="2"/></svg>
<svg style="left:18px;top:262px;" width="3" height="3" viewBox="0 0 3 3"><path d="M3 0 L3 3 L0 3 Z" fill="#9a9a9a"/></svg>
<svg style="left:6px;top:269px;" width="14" height="12" viewBox="0 0 14 12"><path d="M3 11 L2 6 L8 1 L11 4 L6 10 Z" fill="#c4c4c4"/><circle cx="5.5" cy="7" r="1" fill="#555"/><path d="M9 1 L12 0" stroke="#c4c4c4" stroke-width="1"/></svg>
<svg style="left:18px;top:278px;" width="3" height="3" viewBox="0 0 3 3"><path d="M3 0 L3 3 L0 3 Z" fill="#9a9a9a"/></svg>
<svg style="left:6px;top:284px;" width="14" height="12" viewBox="0 0 14 12"><path d="M2 1.5 L11 1.5 M6.5 1.5 L6.5 11 M4.5 11 L8.5 11 M2 1.5 L2 3.5 M11 1.5 L11 3.5" fill="none" stroke="#c4c4c4" stroke-width="1.6"/></svg>
<svg style="left:18px;top:293px;" width="3" height="3" viewBox="0 0 3 3"><path d="M3 0 L3 3 L0 3 Z" fill="#9a9a9a"/></svg>
<svg style="left:6px;top:300px;" width="14" height="12" viewBox="0 0 14 12"><path d="M3 1 L3 10 L5 8 L6.5 11 L8 10.3 L6.7 7.5 L9.5 7.3 Z" fill="#c4c4c4"/><rect x="3.5" y="4" width="2" height="2" fill="#222"/></svg>
<svg style="left:18px;top:309px;" width="3" height="3" viewBox="0 0 3 3"><path d="M3 0 L3 3 L0 3 Z" fill="#9a9a9a"/></svg>
<svg style="left:6px;top:315px;" width="14" height="12" viewBox="0 0 14 12"><path d="M4 1.5 L9 1.5 L12 6 L9 10.5 L4 10.5 L1 6 Z" fill="none" stroke="#c4c4c4" stroke-width="1.8"/><circle cx="6.5" cy="6" r="1.5" fill="#c4c4c4"/></svg>
<svg style="left:18px;top:324px;" width="3" height="3" viewBox="0 0 3 3"><path d="M3 0 L3 3 L0 3 Z" fill="#9a9a9a"/></svg>
<svg style="left:6px;top:331px;" width="14" height="12" viewBox="0 0 14 12"><path d="M3 6 L3 3 Q3.8 2 4.5 3 L4.5 5 L4.5 1.8 Q5.3 0.8 6 1.8 L6 5 L6 1.5 Q6.8 0.5 7.5 1.5 L7.5 5 L7.5 2.5 Q8.3 1.5 9 2.5 L9 8 Q8.5 11 6 11 Q3.5 11 2 8 L1 6 Q1.8 5 3 6 Z" fill="#c4c4c4"/></svg>
<svg style="left:18px;top:340px;" width="3" height="3" viewBox="0 0 3 3"><path d="M3 0 L3 3 L0 3 Z" fill="#9a9a9a"/></svg>
<svg style="left:6px;top:346px;" width="14" height="12" viewBox="0 0 14 12"><circle cx="5" cy="5" r="3.5" fill="none" stroke="#c4c4c4" stroke-width="1.6"/><path d="M7.5 7.5 L11 11" stroke="#c4c4c4" stroke-width="2"/></svg>
<svg style="left:4px;top:361px;" width="7" height="7" viewBox="0 0 7 7"><rect x="0" y="0" width="4" height="4" fill="#111" stroke="#ccc" stroke-width="0.8"/><rect x="2.5" y="2.5" width="4" height="4" fill="#eee"/></svg>
<svg style="left:16px;top:361px;" width="7" height="7" viewBox="0 0 7 7"><path d="M1 1 L5 1 L5 5 M3 3 L5 1" fill="none" stroke="#ccc" stroke-width="1"/></svg>
<div class="a" style="left:11px;top:377px;width:11px;height:10px;background:#ffffff;border:1px solid #999;"></div>
<div class="a" style="left:5px;top:370.5px;width:11px;height:10px;background:#000000;border:1px solid #cfcfcf;"></div>
<svg style="left:7px;top:391px;" width="12" height="10" viewBox="0 0 12 10"><rect x="0.5" y="0.5" width="11" height="9" fill="none" stroke="#cfcfcf" stroke-width="1"/><circle cx="6" cy="5" r="2.6" fill="none" stroke="#cfcfcf" stroke-width="1.2"/></svg>
<svg style="left:7px;top:404px;" width="12" height="11" viewBox="0 0 12 11"><rect x="2" y="0.5" width="9" height="7" fill="#888" stroke="#d0d0d0" stroke-width="1"/><rect x="0.5" y="3" width="9" height="7" fill="#aaa" stroke="#e0e0e0" stroke-width="1"/></svg>
<div class="a" style="left:36px;top:60px;width:788px;height:361px;background:#282828;"></div>
<div class="a" style="left:69.7px;top:62.3px;width:720.3px;height:359px;background:#1c1c1c;"></div>
<div class="a" style="left:70.7px;top:63.3px;width:718.3px;height:358px;background:#ffffff;"></div>
<svg style="left:0px;top:0px;left:0;top:0;" width="1000" height="421" viewBox="0 0 1000 421">
<path d="M325 106.5 Q419.5 134 514 106.5 C463.9 151.7 429.1 222.5 419.5 267.5 C409.9 222.5 375.1 151.7 325 106.5 Z" fill="#000"/>
<rect x="325" y="106.5" width="189" height="163" fill="none" stroke="#3c3c3c" stroke-width="1"/>
</svg>
<div class="a" style="left:322.5px;top:104.0px;width:5px;height:5px;background:#ffffff;border:1px solid #444;"></div>
<div class="a" style="left:417.0px;top:104.0px;width:5px;height:5px;background:#ffffff;border:1px solid #444;"></div>
<div class="a" style="left:511.5px;top:104.0px;width:5px;height:5px;background:#ffffff;border:1px solid #444;"></div>
<div class="a" style="left:322.5px;top:185.5px;width:5px;height:5px;background:#ffffff;border:1px solid #444;"></div>
<div class="a" style="left:511.5px;top:185.5px;width:5px;height:5px;background:#ffffff;border:1px solid #444;"></div>
<div class="a" style="left:322.5px;top:267.0px;width:5px;height:5px;background:#ffffff;border:1px solid #444;"></div>
<div class="a" style="left:511.5px;top:267.0px;width:5px;height:5px;background:#ffffff;border:1px solid #444;"></div>
<div class="a" style="left:322.5px;top:104.0px;width:5px;height:5px;background:#333;border:1px solid #222;"></div>
<div class="a" style="left:511.5px;top:104.0px;width:5px;height:5px;background:#333;border:1px solid #222;"></div>
<div class="a" style="left:407px;top:262.5px;width:24px;height:12px;background:rgba(255,255,255,0.85);border:1.5px solid #c8463c;"></div>
<div class="a" style="left:417.0px;top:267.0px;width:5px;height:5px;background:#555;border:1px solid #333;border-radius:1px;"></div>
<div class="a" style="left:418.5px;top:262.5px;width:2px;height:5px;background:#111;"></div>
<div class="a" style="left:789px;top:63.3px;width:1px;height:358px;background:#1e1e1e;"></div>
<div class="a" style="left:823.5px;top:38px;width:9.5px;height:383px;background:#3c3c3c;"></div>
<div class="a" style="left:833px;top:38px;width:2px;height:383px;background:#2e2e2e;"></div>
<div class="a" style="left:835px;top:38px;width:22px;height:383px;background:#525252;"></div>
<div class="a" style="left:835px;top:38px;width:2px;height:383px;background:#4e4e4e;"></div>
<div class="a" style="left:835px;top:38px;width:22px;height:7px;background:#3d3d3d;"></div>
<svg style="left:850px;top:40px;" width="6" height="4" viewBox="0 0 6 4"><path d="M3 0 L0 2 L3 4 Z M6 0 L3 2 L6 4 Z" fill="#d0d0d0"/></svg>
<div class="a" style="left:856.5px;top:38px;width:1.5px;height:383px;background:#303030;"></div>
<div class="a" style="left:858px;top:38px;width:3px;height:383px;background:#4a4a4a;"></div>
<div class="a" style="left:861px;top:38px;width:135px;height:383px;background:#535353;"></div>
<div class="a" style="left:858px;top:38px;width:138px;height:7px;background:#3d3d3d;"></div>
<svg style="left:989px;top:40px;" width="6" height="4" viewBox="0 0 6 4"><path d="M0 0 L3 2 L0 4 Z M3 0 L6 2 L3 4 Z" fill="#d0d0d0"/></svg>
<div class="a" style="left:995px;top:38px;width:5px;height:383px;background:#3a3a3a;"></div>
<div class="a" style="left:995px;top:38px;width:2px;height:383px;background:#2e2e2e;"></div>
<div class="a" style="left:997px;top:38px;width:3px;height:383px;background:#505050;"></div>
<div class="a" style="left:836px;top:46px;width:20px;height:22px;background:#535353;border-top:1px solid #5e5e5e;border-bottom:1px solid #3e3e3e;"></div>
<div class="a" style="left:836px;top:69px;width:20px;height:21px;background:#535353;border-top:1px solid #5e5e5e;border-bottom:1px solid #3e3e3e;"></div>
<div class="a" style="left:836px;top:93px;width:20px;height:38px;background:#535353;border-top:1px solid #5e5e5e;border-bottom:1px solid #3e3e3e;"></div>
<div class="a" style="left:836px;top:131px;width:20px;height:290px;background:#525252;"></div>
<svg style="left:840px;top:49px;" width="14" height="16" viewBox="0 0 14 16"><rect x="2" y="2" width="5" height="3" fill="#cfcfcf"/><rect x="2" y="6" width="5" height="3" fill="#bbb"/><rect x="2" y="10" width="5" height="2" fill="#cfcfcf"/><path d="M9 3 Q12 6 10 11" fill="none" stroke="#d6d6d6" stroke-width="1.6"/><circle cx="3.5" cy="14" r="1" fill="#ddd"/></svg>
<svg style="left:840px;top:73px;" width="14" height="14" viewBox="0 0 14 14"><rect x="1.5" y="3" width="4" height="4" fill="none" stroke="#ddd" stroke-width="1"/><rect x="1.5" y="8" width="4" height="3" fill="none" stroke="#ddd" stroke-width="1"/><circle cx="9" cy="4.5" r="1.5" fill="#ddd"/><circle cx="9" cy="9" r="1.5" fill="#ddd"/><rect x="1" y="12" width="10" height="1.5" fill="#ddd"/></svg>
<div class="a t" id="t74" style="left:840.5px;top:101px;font-size:10px;color:#e0e0e0;font-weight:bold;transform:scaleX(1.106);transform-origin:0 0;">A</div>
<div class="a" style="left:850px;top:101px;width:1px;height:11px;background:#7a8aa0;"></div>
<div class="a t" id="t75" style="left:841px;top:117px;font-size:10px;color:#e0e0e0;font-weight:bold;transform:scaleX(1.258);transform-origin:0 0;">¶</div>
<div class="a" style="left:861px;top:45px;width:17px;height:10px;background:#535353;border-right:1px solid #3a3a3a;"></div>
<div class="a" style="left:858px;top:45px;width:138px;height:10px;background:#3d3d3d;"></div>
<div class="a" style="left:860px;top:45px;width:19px;height:11px;background:#535353;"></div>
<div class="a t" id="t76" style="left:862px;top:46.5px;font-size:7.2px;color:#e6e6e6;transform:scaleX(1.071);transform-origin:0 0;">颜色</div>
<div class="a t" id="t77" style="left:883px;top:46.5px;font-size:7.2px;color:#bdbdbd;transform:scaleX(1.000);transform-origin:0 0;">色板</div>
<svg style="left:987px;top:47px;" width="8" height="6" viewBox="0 0 8 6"><path d="M0 1 L3 4 L6 1 Z" fill="#ccc"/><path d="M5 1 L8 1 M5 3 L8 3 M5 5 L8 5" stroke="#ccc" stroke-width="0.8"/></svg>
<div class="a" style="left:867px;top:67.5px;width:11px;height:11px;background:#ffffff;border:1px solid #888;"></div>
<div class="a" style="left:862.5px;top:61.5px;width:9.5px;height:10.5px;background:#000000;border:1px solid #c8c8c8;"></div>
<div class="a t" id="t78" style="left:883px;top:63px;font-size:7px;color:#858585;transform:scaleX(0.988);transform-origin:0 0;">R</div>
<div class="a" style="left:893px;top:62px;width:64px;height:4px;background:linear-gradient(90deg,#000 0%,#d02020 100%);border-top:1px solid #333;"></div>
<svg style="left:889.5px;top:67px;" width="7" height="5" viewBox="0 0 7 5"><path d="M3.5 0 L7 5 L0 5 Z" fill="#d8d8d8"/></svg>
<div class="a" style="left:961px;top:61px;width:22px;height:11px;background:#404040;border:1px solid #383838;"></div>
<div class="a t" id="t79" style="left:964px;top:63px;font-size:7px;color:#7a7a7a;transform:scaleX(1.024);transform-origin:0 0;">0</div>
<div class="a t" id="t80" style="left:883px;top:77.5px;font-size:7px;color:#858585;transform:scaleX(0.917);transform-origin:0 0;">G</div>
<div class="a" style="left:893px;top:76.5px;width:64px;height:4px;background:linear-gradient(90deg,#000 0%,#22b022 100%);border-top:1px solid #333;"></div>
<svg style="left:889.5px;top:81.5px;" width="7" height="5" viewBox="0 0 7 5"><path d="M3.5 0 L7 5 L0 5 Z" fill="#d8d8d8"/></svg>
<div class="a" style="left:961px;top:75.5px;width:22px;height:11px;background:#404040;border:1px solid #383838;"></div>
<div class="a t" id="t81" style="left:964px;top:77.5px;font-size:7px;color:#7a7a7a;transform:scaleX(1.024);transform-origin:0 0;">0</div>
<div class="a t" id="t82" style="left:883px;top:92.5px;font-size:7px;color:#858585;transform:scaleX(1.070);transform-origin:0 0;">B</div>
<div class="a" style="left:893px;top:91.5px;width:64px;height:4px;background:linear-gradient(90deg,#000 0%,#2020c0 100%);border-top:1px solid #333;"></div>
<svg style="left:889.5px;top:96.5px;" width="7" height="5" viewBox="0 0 7 5"><path d="M3.5 0 L7 5 L0 5 Z" fill="#d8d8d8"/></svg>
<div class="a" style="left:961px;top:90.5px;width:22px;height:11px;background:#404040;border:1px solid #383838;"></div>
<div class="a t" id="t83" style="left:964px;top:92.5px;font-size:7px;color:#7a7a7a;transform:scaleX(1.024);transform-origin:0 0;">0</div>
<div class="a" style="left:861px;top:107px;width:126px;height:9px;background:linear-gradient(180deg,rgba(255,255,255,0.55) 0%,rgba(255,255,255,0) 40%,rgba(0,0,0,0) 55%,rgba(0,0,0,0.75) 100%),linear-gradient(90deg,#ff3000 0%,#ff9000 9%,#f0e000 18%,#30c020 32%,#10b0c0 46%,#2080e0 54%,#1010c0 65%,#9010c0 76%,#f010a0 88%,#ff1030 100%);"></div>
<div class="a" style="left:982px;top:107px;width:5px;height:4.5px;background:#ffffff;"></div>
<div class="a" style="left:982px;top:111.5px;width:5px;height:4.5px;background:#000000;"></div>
<div class="a" style="left:858px;top:119px;width:138px;height:2px;background:#2f2f2f;"></div>
<div class="a" style="left:858px;top:121px;width:138px;height:12px;background:#3d3d3d;"></div>
<div class="a" style="left:860px;top:121px;width:19px;height:12px;background:#535353;"></div>
<div class="a t" id="t84" style="left:862px;top:123px;font-size:7.2px;color:#e6e6e6;transform:scaleX(1.071);transform-origin:0 0;">调整</div>
<div class="a t" id="t85" style="left:882px;top:123px;font-size:7.2px;color:#bdbdbd;transform:scaleX(1.071);transform-origin:0 0;">样式</div>
<svg style="left:987px;top:124px;" width="8" height="6" viewBox="0 0 8 6"><path d="M0 1 L3 4 L6 1 Z" fill="#ccc"/><path d="M5 1 L8 1 M5 3 L8 3 M5 5 L8 5" stroke="#ccc" stroke-width="0.8"/></svg>
<div class="a t" id="t86" style="left:865px;top:135.5px;font-size:7px;color:#c8c8c8;transform:scaleX(0.964);transform-origin:0 0;">添加调整</div>
<svg style="left:886px;top:149px;" width="10" height="10" viewBox="0 0 10 10"><circle cx="5" cy="5" r="2" fill="#cccccc"/><path d="M5 0 L5 2 M5 8 L5 10 M0 5 L2 5 M8 5 L10 5 M1.5 1.5 L3 3 M7 7 L8.5 8.5 M1.5 8.5 L3 7 M7 3 L8.5 1.5" stroke="#cccccc" stroke-width="1"/></svg>
<svg style="left:900px;top:149px;" width="10" height="10" viewBox="0 0 10 10"><path d="M0 9 L0 5 L2 3 L4 6 L6 2 L8 5 L10 4 L10 9 Z" fill="#cccccc"/><rect x="0" y="8" width="10" height="1.5" fill="#fff"/></svg>
<svg style="left:914.5px;top:149px;" width="10" height="10" viewBox="0 0 10 10"><rect x="0.5" y="0.5" width="9" height="9" fill="#777" stroke="#cccccc" stroke-width="1"/><path d="M1 9 Q5 7 9 1" fill="none" stroke="#fff" stroke-width="1.3"/></svg>
<svg style="left:928px;top:149px;" width="10" height="10" viewBox="0 0 10 10"><rect x="0.5" y="0.5" width="9" height="9" fill="#555" stroke="#cccccc" stroke-width="1"/><path d="M0 10 L10 0 L10 10 Z" fill="#cfcfcf"/><path d="M1 2.5 L4 2.5" stroke="#fff" stroke-width="1"/></svg>
<svg style="left:942px;top:149px;" width="10" height="10" viewBox="0 0 10 10"><path d="M0.5 1 L9.5 1 L5 9.5 Z" fill="none" stroke="#cccccc" stroke-width="1.5"/></svg>
<svg style="left:879.5px;top:164.5px;" width="10" height="10" viewBox="0 0 10 10"><rect x="0" y="1" width="10" height="8" fill="#666" stroke="#cccccc" stroke-width="1"/><rect x="0" y="1" width="10" height="3.5" fill="#cccccc"/></svg>
<svg style="left:893px;top:164.5px;" width="10" height="10" viewBox="0 0 10 10"><path d="M5 1 L5 4 M1 4 L9 4 M1 4 L0 8 L3 8 Z M9 4 L7 8 L10 8 Z" fill="#cccccc" stroke="#cccccc" stroke-width="1"/></svg>
<svg style="left:907px;top:164.5px;" width="10" height="10" viewBox="0 0 10 10"><rect x="0.5" y="0.5" width="9" height="9" fill="#888" stroke="#cccccc" stroke-width="1"/><rect x="5" y="1" width="4" height="8" fill="#eee"/></svg>
<svg style="left:921.5px;top:164.5px;" width="10" height="10" viewBox="0 0 10 10"><rect x="0" y="0" width="6" height="6" fill="#cccccc"/><circle cx="6" cy="6" r="3.5" fill="#999" stroke="#cccccc" stroke-width="1"/></svg>
<svg style="left:935px;top:164.5px;" width="10" height="10" viewBox="0 0 10 10"><circle cx="5" cy="3.5" r="3" fill="#cccccc"/><circle cx="3" cy="7" r="3" fill="#eee"/><circle cx="7" cy="7" r="3" fill="#ccc"/></svg>
<svg style="left:949.5px;top:164.5px;" width="10" height="10" viewBox="0 0 10 10"><path d="M0 2 L10 2 M0 5 L10 5 M0 8 L10 8 M2 0 L2 10 M5 0 L5 10 M8 0 L8 10" stroke="#cccccc" stroke-width="1"/></svg>
<svg style="left:885px;top:180.5px;" width="10" height="10" viewBox="0 0 10 10"><rect x="0.5" y="0.5" width="9" height="9" fill="#555" stroke="#cccccc" stroke-width="1"/><path d="M2 8 Q5 8 8 2" fill="none" stroke="#fff" stroke-width="1.5"/></svg>
<svg style="left:900px;top:180.5px;" width="10" height="10" viewBox="0 0 10 10"><rect x="0.5" y="0.5" width="9" height="9" fill="#777" stroke="#cccccc" stroke-width="1"/><path d="M0 9 L9 0" stroke="#eee" stroke-width="2.5"/></svg>
<svg style="left:914.5px;top:180.5px;" width="10" height="10" viewBox="0 0 10 10"><rect x="0.5" y="0.5" width="9" height="9" fill="#777" stroke="#cccccc" stroke-width="1"/><path d="M1 8 L4 5 L6 6 L9 2" fill="none" stroke="#fff" stroke-width="2"/></svg>
<svg style="left:928px;top:180.5px;" width="10" height="10" viewBox="0 0 10 10"><rect x="0.5" y="0.5" width="9" height="9" fill="#aaa" stroke="#cccccc" stroke-width="1"/><path d="M1 1 L5 5 L9 1 Z M1 9 L5 5 L9 9 Z" fill="#444"/></svg>
<svg style="left:942px;top:180.5px;" width="10" height="10" viewBox="0 0 10 10"><defs><linearGradient id="ag" x1="0" x2="1"><stop offset="0" stop-color="#333"/><stop offset="1" stop-color="#eee"/></linearGradient></defs><rect x="0.5" y="0.5" width="9" height="9" fill="url(#ag)" stroke="#dcdcdc" stroke-width="1"/></svg>
<div class="a" style="left:858px;top:195px;width:138px;height:3px;background:#2f2f2f;"></div>
<div class="a" style="left:858px;top:198px;width:138px;height:10px;background:#3d3d3d;"></div>
<div class="a" style="left:922px;top:198px;width:63px;height:10px;background:#363636;"></div>
<div class="a" style="left:860px;top:198px;width:19px;height:11px;background:#535353;"></div>
<div class="a t" id="t87" style="left:862px;top:199.5px;font-size:7.2px;color:#e6e6e6;transform:scaleX(1.071);transform-origin:0 0;">图层</div>
<div class="a t" id="t88" style="left:883px;top:199.5px;font-size:7.2px;color:#bdbdbd;transform:scaleX(1.071);transform-origin:0 0;">通道</div>
<div class="a t" id="t89" style="left:905px;top:199.5px;font-size:7.2px;color:#bdbdbd;transform:scaleX(1.071);transform-origin:0 0;">路径</div>
<svg style="left:987px;top:200px;" width="8" height="6" viewBox="0 0 8 6"><path d="M0 1 L3 4 L6 1 Z" fill="#ccc"/><path d="M5 1 L8 1 M5 3 L8 3 M5 5 L8 5" stroke="#ccc" stroke-width="0.8"/></svg>
<div class="a" style="left:861px;top:209px;width:132px;height:14px;background:#4e4e4e;border:1px solid #444;"></div>
<div class="a t" id="t90" style="left:864px;top:212.5px;font-size:7px;color:#b8b8b8;transform:scaleX(1.223);transform-origin:0 0;">ρ类型</div>
<div class="a t" id="t91" style="left:896px;top:212.5px;font-size:7px;color:#b0b0b0;transform:scaleX(1.041);transform-origin:0 0;">÷</div>
<svg style="left:913px;top:212px;" width="10" height="9" viewBox="0 0 10 9"><rect x="0.5" y="0.5" width="9" height="8" fill="none" stroke="#9e9e9e" stroke-width="1"/><path d="M1 8 L4 4 L6 6 L9 3" fill="none" stroke="#9e9e9e" stroke-width="1"/></svg>
<svg style="left:926px;top:212px;" width="9" height="9" viewBox="0 0 9 9"><circle cx="4.5" cy="4.5" r="3.8" fill="none" stroke="#9e9e9e" stroke-width="1.2"/><path d="M4.5 0.7 A3.8 3.8 0 0 1 4.5 8.3 Z" fill="#9e9e9e"/></svg>
<svg style="left:940px;top:212px;" width="9" height="9" viewBox="0 0 9 9"><path d="M1 1.5 L8 1.5 M4.5 1.5 L4.5 8.5" stroke="#9e9e9e" stroke-width="1.5"/></svg>
<svg style="left:953px;top:212px;" width="9" height="9" viewBox="0 0 9 9"><rect x="0.5" y="0.5" width="8" height="8" fill="none" stroke="#9e9e9e" stroke-width="1"/><rect x="2.5" y="2.5" width="4" height="4" fill="#9e9e9e"/></svg>
<svg style="left:966px;top:212px;" width="9" height="9" viewBox="0 0 9 9"><rect x="0.5" y="1.5" width="8" height="7" fill="none" stroke="#9e9e9e" stroke-width="1"/><rect x="3" y="4" width="3" height="3" fill="#9e9e9e"/></svg>
<svg style="left:986px;top:212px;" width="6" height="9" viewBox="0 0 6 9"><circle cx="3" cy="3" r="2.3" fill="#888"/><rect x="2" y="5" width="2" height="4" fill="#888"/></svg>
<div class="a" style="left:858px;top:224px;width:138px;height:1px;background:#474747;"></div>
<div class="a" style="left:862px;top:227px;width:56px;height:14px;background:#4a4a4a;border:1px solid #404040;"></div>
<div class="a t" id="t92" style="left:865px;top:229.5px;font-size:7.2px;color:#d8d8d8;transform:scaleX(1.000);transform-origin:0 0;">正常</div>
<div class="a t" id="t93" style="left:912px;top:229.5px;font-size:7px;color:#cfcfcf;transform:scaleX(1.041);transform-origin:0 0;">÷</div>
<div class="a t" id="t94" style="left:927px;top:230px;font-size:7px;color:#b8b8b8;transform:scaleX(1.102);transform-origin:0 0;">不透明度:</div>
<div class="a" style="left:961px;top:227px;width:23px;height:14px;background:#404040;border:1px solid #383838;"></div>
<div class="a t" id="t95" style="left:964px;top:230px;font-size:7px;color:#6e6e6e;transform:scaleX(0.894);transform-origin:0 0;">100%</div>
<div class="a" style="left:984px;top:227px;width:10px;height:13px;background:#4c4c4c;border:1px solid #3e3e3e;"></div>
<svg style="left:986.5px;top:232px;" width="5" height="3" viewBox="0 0 5 3"><path d="M0 0 L5 0 L2.5 3 Z" fill="#ccc"/></svg>
<div class="a t" id="t96" style="left:862px;top:245.5px;font-size:7px;color:#a8a8a8;transform:scaleX(0.940);transform-origin:0 0;">锁定:</div>
<svg style="left:880px;top:244px;" width="9" height="9" viewBox="0 0 9 9"><rect x="0.5" y="0.5" width="8" height="8" fill="none" stroke="#9e9e9e" stroke-width="1"/><path d="M0.5 0.5 L8.5 8.5 M2 6 L6 2" stroke="#9e9e9e" stroke-width="0.8"/></svg>
<svg style="left:893px;top:244px;" width="10" height="9" viewBox="0 0 10 9"><path d="M1 8.5 L9 0.5" stroke="#9e9e9e" stroke-width="1.5"/></svg>
<svg style="left:906px;top:244px;" width="9" height="9" viewBox="0 0 9 9"><path d="M4.5 0 L4.5 9 M0 4.5 L9 4.5" stroke="#9e9e9e" stroke-width="1.2"/></svg>
<svg style="left:920px;top:244px;" width="9" height="9" viewBox="0 0 9 9"><rect x="1" y="4" width="7" height="5" fill="#9e9e9e"/><path d="M2.5 4 L2.5 2.5 Q4.5 0 6.5 2.5 L6.5 4" fill="none" stroke="#9e9e9e" stroke-width="1"/></svg>
<div class="a t" id="t97" style="left:942px;top:245.5px;font-size:7px;color:#a8a8a8;transform:scaleX(0.940);transform-origin:0 0;">填充:</div>
<div class="a" style="left:961px;top:243px;width:23px;height:12px;background:#404040;border:1px solid #383838;"></div>
<div class="a t" id="t98" style="left:964px;top:245px;font-size:7px;color:#6e6e6e;transform:scaleX(0.894);transform-origin:0 0;">100%</div>
<div class="a" style="left:984px;top:243px;width:10px;height:12px;background:#4c4c4c;border:1px solid #3e3e3e;"></div>
<svg style="left:986.5px;top:248px;" width="5" height="3" viewBox="0 0 5 3"><path d="M0 0 L5 0 L2.5 3 Z" fill="#ccc"/></svg>
<div class="a" style="left:858px;top:256px;width:138px;height:1px;background:#3e3e3e;"></div>
<div class="a" style="left:861px;top:257px;width:127px;height:164px;background:#474747;"></div>
<div class="a" style="left:989px;top:257px;width:2px;height:164px;background:#333333;"></div>
<div class="a" style="left:991px;top:257px;width:4px;height:164px;background:#484848;"></div>
<div class="a" style="left:861px;top:258px;width:15px;height:16px;background:#434343;"></div>
<div class="a" style="left:876px;top:258px;width:112px;height:16px;background:#5b7492;"></div>
<div class="a" style="left:930px;top:258px;width:58px;height:16px;background:linear-gradient(90deg,rgba(110,130,170,0) 0%,rgba(125,145,185,0.35) 100%);"></div>
<div class="a" style="left:861px;top:274px;width:127px;height:1px;background:#363636;"></div>
<div class="a" style="left:861px;top:275px;width:127px;height:16px;background:#45433f;"></div>
<div class="a" style="left:861px;top:275px;width:15px;height:16px;background:#434343;"></div>
<div class="a" style="left:861px;top:291px;width:127px;height:1px;background:#383838;"></div>
<svg style="left:863px;top:262.5px;" width="10" height="6" viewBox="0 0 10 6"><path d="M0.5 3 Q5 -1.5 9.5 3 Q5 7.5 0.5 3 Z" fill="none" stroke="#d8d8d8" stroke-width="1.1"/><circle cx="5" cy="3" r="1.4" fill="#d8d8d8"/></svg>
<svg style="left:863px;top:280.5px;" width="10" height="6" viewBox="0 0 10 6"><path d="M0.5 3 Q5 -1.5 9.5 3 Q5 7.5 0.5 3 Z" fill="none" stroke="#d8d8d8" stroke-width="1.1"/><circle cx="5" cy="3" r="1.4" fill="#d8d8d8"/></svg>
<div class="a" style="left:876px;top:258px;width:22px;height:16px;background:transparent;border:1px solid #c8d2de;"></div>
<div class="a" style="left:878px;top:260px;width:10px;height:12px;background-color:#fff;background-image:linear-gradient(45deg,#dccbd4 25%,transparent 25%,transparent 75%,#dccbd4 75%),linear-gradient(45deg,#dccbd4 25%,transparent 25%,transparent 75%,#dccbd4 75%);background-size:4px 4px;background-position:0 0,2px 2px;"></div>
<div class="a" style="left:886px;top:260px;width:2.5px;height:2.5px;background:#111;"></div>
<div class="a" style="left:888px;top:261px;width:8px;height:2px;background:#e8eef4;"></div>
<div class="a" style="left:889px;top:264px;width:6px;height:8px;background:transparent;border:1px solid #dfe6ee;"></div>
<div class="a" style="left:891px;top:266px;width:2px;height:4px;background:#dfe6ee;"></div>
<div class="a t" id="t99" style="left:902px;top:262px;font-size:7.5px;color:#f2f5fa;font-weight:bold;transform:scaleX(0.925);transform-origin:0 0;">多边形 1</div>
<div class="a" style="left:878px;top:277px;width:18px;height:12px;background:#ffffff;border:1px solid #999;"></div>
<div class="a t" id="t100" style="left:903px;top:279.5px;font-size:7.5px;color:#eeeeee;font-style:italic;font-weight:bold;transform:scaleX(0.812);transform-origin:0 0;">背景</div>
<svg style="left:973px;top:280px;" width="8" height="9" viewBox="0 0 8 9"><rect x="1" y="4" width="6" height="5" fill="#d0d0d0"/><path d="M2 4 L2 2.5 Q4 0 6 2.5 L6 4" fill="none" stroke="#d0d0d0" stroke-width="1.1"/></svg>
</body></html>
